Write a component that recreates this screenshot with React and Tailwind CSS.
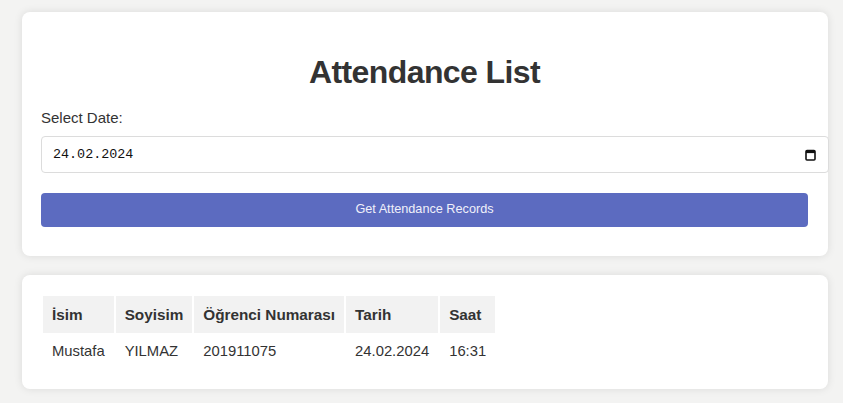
import React from "react";

function CalendarIcon() {
  return (
    <svg width="11" height="12" viewBox="0 0 11 12" className="block">
      <rect x="1" y="1.5" width="9" height="9.5" rx="1" fill="none" stroke="#111" strokeWidth="1.6" />
      <rect x="1" y="1.5" width="9" height="2.6" fill="#111" />
    </svg>
  );
}

export default function App() {
  const headers = ["İsim", "Soyisim", "Öğrenci Numarası", "Tarih", "Saat"];
  const row = ["Mustafa", "YILMAZ", "201911075", "24.02.2024", "16:31"];
  return (
    <div
      className="w-[843px] h-[403px] overflow-hidden bg-[#f3f3f2] pt-[12px] text-[#333]"
      style={{ fontFamily: '"Liberation Sans", Arial, sans-serif' }}
    >
      <div className="ml-[22px] w-[806px] bg-white rounded-[8px] shadow-[0_0_8px_rgba(0,0,0,0.1)] pl-[19px] pr-[20px] pt-[44px] pb-[29px]">
        <h2 className="text-center text-[32px] leading-[32px] font-bold tracking-[-0.6px] text-[#333]">
          Attendance List
        </h2>
        <div className="mt-[21px] text-[15px] leading-[18px] text-[#333]">Select Date:</div>
        <div className="mt-[9px] w-[788px] h-[37px] border border-[#dcdcdc] rounded-[4px] flex items-center justify-between pl-[11px] pr-[12px] bg-white">
          <span
            className="text-[13.4px] text-[#111] pt-[1px]"
            style={{ fontFamily: '"Liberation Mono", "DejaVu Sans Mono", monospace' }}
          >
            24.02.2024
          </span>
          <CalendarIcon />
        </div>
        <div className="mt-[20px] h-[34px] rounded-[4px] bg-[#5c6bc0] flex items-center justify-center text-[12.7px] text-[#f0f0fa]">
          Get Attendance Records
        </div>
      </div>

      <div className="mt-[19px] ml-[22px] w-[806px] bg-white rounded-[8px] shadow-[0_0_8px_rgba(0,0,0,0.1)] pl-[19px] pr-[20px] pt-[19px] pb-[15px]">
        <table className="border-separate border-spacing-[2px] leading-[17px]">
          <thead>
            <tr>
              {headers.map((h) => (
                <th key={h} className="bg-[#f2f2f2] text-left text-[15.3px] font-bold px-[9px] py-[10px] text-[#333]">
                  {h}
                </th>
              ))}
            </tr>
          </thead>
          <tbody>
            <tr>
              {row.map((c) => (
                <td key={c} className="text-left text-[14.8px] px-[9px] pt-[8px] pb-[12px] text-[#333]">
                  {c}
                </td>
              ))}
            </tr>
          </tbody>
        </table>
      </div>
    </div>
  );
}
